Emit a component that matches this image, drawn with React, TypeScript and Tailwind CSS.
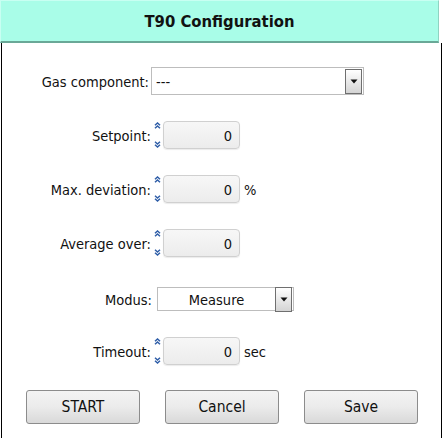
import React from 'react';

const FONT = { fontFamily: '"DejaVu Sans Condensed", Tahoma, "DejaVu Sans", sans-serif' };

function Spinner() {
  return (
    <div className="flex flex-col justify-between h-[26px] w-[7px] ml-[3px] mr-[2px] self-start mt-[1px]">
      <svg width="7" height="7" viewBox="0 0 7 7">
        <path d="M1 3.3 L3.5 1 L6 3.3" fill="none" stroke="#2f5ea8" strokeWidth="1.5" />
        <path d="M1 6.3 L3.5 4 L6 6.3" fill="none" stroke="#2f5ea8" strokeWidth="1.5" />
      </svg>
      <svg width="7" height="7" viewBox="0 0 7 7">
        <path d="M1 0.7 L3.5 3 L6 0.7" fill="none" stroke="#2f5ea8" strokeWidth="1.5" />
        <path d="M1 3.7 L3.5 6 L6 3.7" fill="none" stroke="#2f5ea8" strokeWidth="1.5" />
      </svg>
    </div>
  );
}

function DropBtn() {
  return (
    <div className="w-[17px] h-[25px] border border-[#6f6f6f] bg-gradient-to-b from-[#ffffff] to-[#d4d4d4] flex items-center justify-center">
      <svg width="8" height="5" viewBox="0 0 8 5">
        <path d="M0.5 0.5 H7.5 L4 4.5 Z" fill="#111" />
      </svg>
    </div>
  );
}

function NumRow({ label, unit, className }: { label: string; unit?: string; className: string }) {
  return (
    <div className={`flex items-center h-[28px] ${className}`}>
      <div className="w-[149px] text-right pt-[3px]">{label}</div>
      <Spinner />
      <div className="w-[77px] h-[28px] rounded-[4px] border border-[#d0d0d0] bg-gradient-to-b from-[#f7f7f7] to-[#ececec] shadow-[0_1px_1px_rgba(0,0,0,0.08)] flex items-center justify-end pr-[7px] pt-[3px]">
        0
      </div>
      {unit && <div className="ml-[4px] pt-[3px]">{unit}</div>}
    </div>
  );
}

export default function App() {
  return (
    <div className="w-[443px] h-[438px] bg-white overflow-hidden text-[14.5px] leading-none text-[#111]" style={FONT}>
      <div className="w-[439px] h-[43px] bg-[#a9fde8] border-t border-l border-[#c8fff2] border-b-2 border-b-[#6aa897] border-r border-r-[#8fd4c2] flex items-center justify-center pt-[2px]">
        <span className="font-bold text-[16.5px] text-[#111]">T90 Configuration</span>
      </div>
      <div className="ml-[1px] w-[441px] h-[395px] border-l border-r border-black flex flex-col">
        <div className="flex items-center h-[28px] mt-[24px]">
          <div className="w-[149px] text-right pr-[2px] pt-[3px]">Gas component:</div>
          <div className="w-[213px] h-[28px] border border-[#bdbdbd] flex items-center justify-between pl-[4px] pr-[1px]">
            <span className="pt-[3px]">---</span>
            <DropBtn />
          </div>
        </div>
        <NumRow label="Setpoint:" className="mt-[26px]" />
        <NumRow label="Max. deviation:" unit="%" className="mt-[26px]" />
        <NumRow label="Average over:" className="mt-[26px]" />
        <div className="flex items-center h-[24px] mt-[30px]">
          <div className="w-[155px] text-right pr-[5px] pt-[3px]">Modus:</div>
          <div className="w-[137px] h-[24px] border border-[#bdbdbd] flex items-center pr-[1px]">
            <span className="flex-1 text-center pt-[3px]">Measure</span>
            <DropBtn />
          </div>
        </div>
        <NumRow label="Timeout:" unit="sec" className="mt-[26px]" />
        <div className="flex mt-[25px] pl-[24px] gap-[25px]">
          {['START', 'Cancel', 'Save'].map(b => (
            <div key={b} className="w-[114px] h-[34px] rounded-[3px] border border-[#8c8c8c] bg-gradient-to-b from-[#f3f3f3] via-[#ebebeb] to-[#d9d9d9] flex items-center justify-center text-[15.5px] pt-[1px]">
              {b}
            </div>
          ))}
        </div>
      </div>
    </div>
  );
}
